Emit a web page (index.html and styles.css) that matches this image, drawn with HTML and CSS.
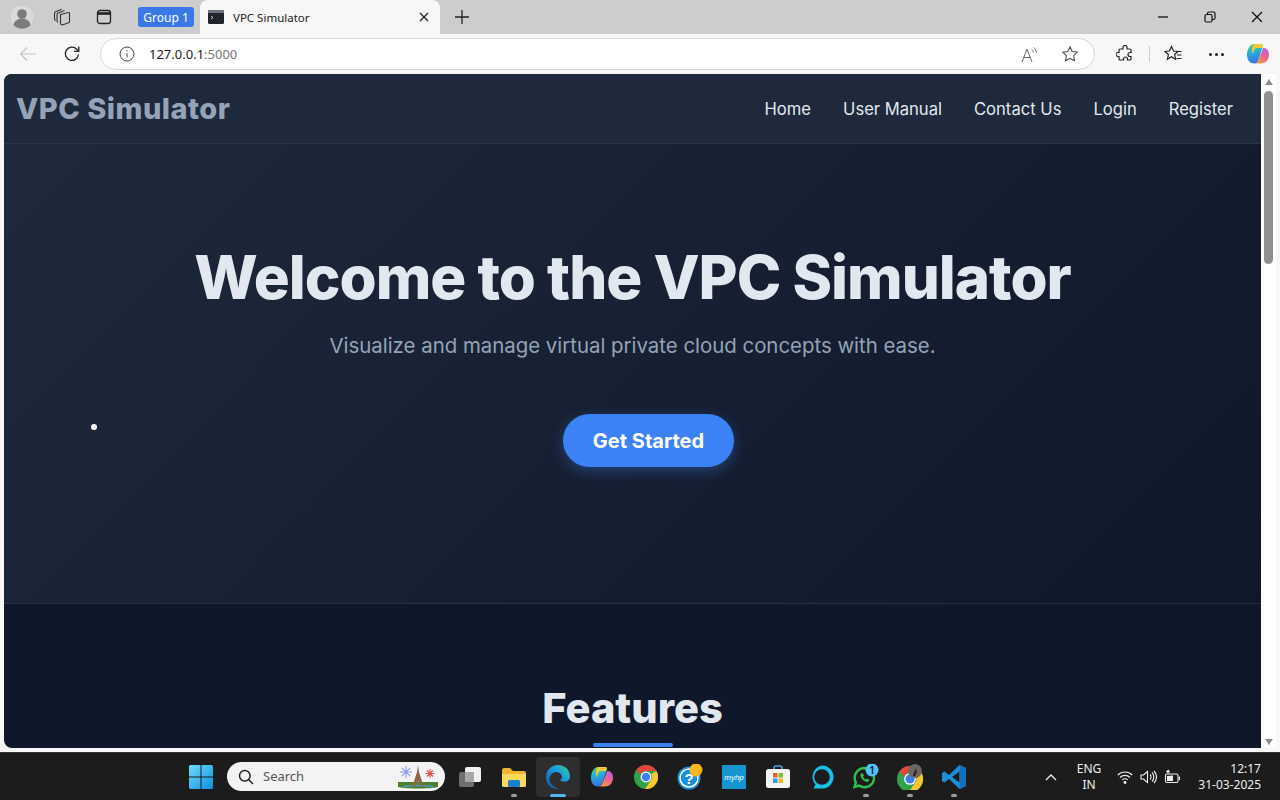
FILE: index.html
```html
<!DOCTYPE html>
<html lang="en">
<head>
    <meta charset="UTF-8">
    <title>VPC Simulator</title>
    <link rel="stylesheet" href="styles.css">
</head>
<body>
    <div class="tab-strip">
        <div class="tab-tools">
            <span class="avatar">
                <svg width="24" height="24" viewBox="0 0 24 24"><circle cx="12" cy="12" r="11.500" fill="#dcdad8"/><circle cx="12" cy="9" r="4.800" fill="#7d7b79"/><path d="M3.500 20c1-5 5-6.500 8.500-6.500s7.500 1.500 8.500 6.500a11.500 11.500 0 0 1-17 0z" fill="#7d7b79"/></svg>
            </span>
            <svg class="tool-workspaces" width="18" height="18" viewBox="0 0 18 18" fill="none" stroke="#333" stroke-width="1.100"><path d="M7.500 6.500l8-2c.7-.1 1 .2 1 .9v8.100c0 .7-.3 1.100-1 1.300l-5.500 2c-1.500.4-2.500-.3-2.500-1.800z" fill="#cdcdcd"/><path d="M5 14.500c-.8-.6-1-1.300-1-2V6.500c0-.8.300-1.300 1-1.600L11.500 2.500"/><path d="M2.600 12.500C1.800 12 1.500 11.300 1.500 10.500V5.500c0-.9.400-1.500 1.200-1.800L8.500 1.300"/></svg>
            <svg class="tool-tabs" width="16" height="16" viewBox="0 0 16 16" fill="none" stroke="#222" stroke-width="1.300"><rect x="1.500" y="1.500" width="13" height="13" rx="2.500"/><path d="M1.500 4.500h13" stroke-width="2.600"/></svg>
        </div>
        <span class="group-chip">Group 1</span>
        <div class="tab">
            <svg width="16" height="14" viewBox="0 0 16 14"><rect width="16" height="14" rx="1.500" fill="#20242c"/><rect y="0" width="16" height="3" fill="#6c7480"/><path d="M3 6l2 1.500L3 9" fill="none" stroke="#d5dae2" stroke-width=".9"/></svg>
            <span class="tab-title">VPC Simulator</span>
            <svg class="tab-close" width="10" height="10" viewBox="0 0 10 10" stroke="#222" stroke-width="1.300"><path d="M1 1l8 8M9 1l-8 8"/></svg>
        </div>
        <svg class="new-tab" width="16" height="16" viewBox="0 0 16 16" stroke="#222" stroke-width="1.300"><path d="M8 1v14M1 8h14"/></svg>
        <div class="window-buttons">
            <svg width="12" height="12" viewBox="0 0 12 12" stroke="#111" stroke-width="1.300"><path d="M1 6h10"/></svg>
            <svg width="12" height="12" viewBox="0 0 12 12" fill="none" stroke="#111" stroke-width="1.200"><rect x="1" y="3.500" width="7" height="7.500" rx="1.500"/><path d="M3.500 3.500V2.500C3.500 1.500 4 1 5 1h4.500C10.500 1 11 1.500 11 2.500V7c0 1-.5 1.500-1.500 1.500H8"/></svg>
            <svg width="12" height="12" viewBox="0 0 12 12" stroke="#111" stroke-width="1.300"><path d="M1 1l10 10M11 1L1 11"/></svg>
        </div>
    </div>

    <div class="toolbar">
        <svg class="nav-back" width="18" height="16" viewBox="0 0 18 16" fill="none" stroke="#c4c4c4" stroke-width="1.200"><path d="M17 8H1.500M8 1.500L1.500 8 8 14.500"/></svg>
        <svg class="nav-reload" width="18" height="18" viewBox="0 0 18 18" fill="none" stroke="#222" stroke-width="1.300"><path d="M15.500 9.500A6.600 6.600 0 1 1 13.500 4L15.500 6"/><path d="M15.800 1.500v4.800H11"/></svg>
        <div class="address-bar">
            <svg width="16" height="16" viewBox="0 0 16 16" fill="none" stroke="#444" stroke-width="1"><circle cx="8" cy="8" r="7"/><path d="M8 7v4.500M8 4.300v1.200"/></svg>
            <span class="url">127.0.0.1<span class="url-port">:5000</span></span>
            <span class="address-end">
                <svg class="read-aloud" width="18" height="17" viewBox="0 0 18 17" fill="none" stroke="#666" stroke-width="1"><path d="M1 16L6 3l5 13M2.800 11.500h6.400"/><path d="M10.500 3.500c1.200.7 1.800 1.700 1.800 3M12.500 1.500c1.800 1.200 2.800 3 2.800 5.300"/></svg>
                <svg width="18" height="18" viewBox="0 0 18 18" fill="none" stroke="#555" stroke-width="1.100"><path d="M9 1.800l2.200 4.700 5 .7-3.600 3.500.9 5.100L9 13.400l-4.500 2.400.9-5.100L1.800 7.200l5-.7z"/></svg>
            </span>
        </div>
        <div class="toolbar-end">
            <svg width="18" height="18" viewBox="0 0 18 18" fill="none" stroke="#222" stroke-width="1.200"><path d="M7 2.500a2 2 0 0 1 4 0V4h3a1 1 0 0 1 1 1v2.500h-1a2 2 0 0 0 0 4h1V14a1 1 0 0 1-1 1h-2.500v-1a2 2 0 0 0-4 0v1H4a1 1 0 0 1-1-1v-2.500H2a2 2 0 0 1 0-4h1V5a1 1 0 0 1 1-1h3z"/></svg>
            <span class="toolbar-divider"></span>
            <svg class="favorites" width="18" height="18" viewBox="0 0 18 18" fill="none" stroke="#222" stroke-width="1.200"><path d="M7.500 1.500l2 4.500 4.500.5-3.400 3 1 4.700-4.100-2.400-4.100 2.400 1-4.700L1 6.500 5.500 6z"/><path d="M12.500 6.500h5M13 10h4.500M12.500 13.500h5"/></svg>
            <span class="more-dots"><i></i><i></i><i></i></span>
            <svg class="copilot" width="24" height="24" viewBox="0 0 24 24"><use href="#copilotIcon"/></svg>
        </div>
    </div>

    <div class="viewport">
        <div class="page">
            <nav class="site-nav">
                <span class="brand">VPC Simulator</span>
                <div class="nav-links">
                    <a href="#">Home</a>
                    <a href="#">User Manual</a>
                    <a href="#">Contact Us</a>
                    <a href="#">Login</a>
                    <a href="#">Register</a>
                </div>
            </nav>
            <section class="hero">
                <span class="particle"></span>
                <h1>Welcome to the VPC Simulator</h1>
                <p>Visualize and manage virtual private cloud concepts with ease.</p>
                <a class="cta" href="#">Get Started</a>
            </section>
            <section class="features">
                <h2>Features</h2>
                <div class="title-bar"></div>
            </section>
        </div>
        <div class="scrollbar">
            <span class="arrow-up"></span>
            <span class="thumb"></span>
            <span class="arrow-down"></span>
        </div>
    </div>

    <div class="taskbar">
        <svg class="start" width="24" height="24" viewBox="0 0 24 24"><defs><linearGradient id="winG" x1="0" y1="0" x2="1" y2="1"><stop offset="0" stop-color="#6fdcfb"/><stop offset="1" stop-color="#0f8fe0"/></linearGradient></defs><path d="M0 1.500A1.500 1.500 0 0 1 1.500 0h10v11.500H0zM12.500 0h10A1.500 1.500 0 0 1 24 1.500v10H12.500zM0 12.500h11.500V24h-10A1.500 1.500 0 0 1 0 22.500zM12.500 12.500H24v10a1.500 1.500 0 0 1-1.500 1.500h-10z" fill="url(#winG)"/></svg>
        <div class="search-box">
            <svg width="16" height="16" viewBox="0 0 16 16" fill="none" stroke="#222" stroke-width="1.500"><circle cx="6.800" cy="6.800" r="5.300"/><path d="M10.800 10.800l4.200 4.200"/></svg>
            <span>Search</span>
            <svg class="search-art" width="42" height="26" viewBox="0 0 42 26"><path d="M1 18h40v5c-8 2-32 2-40 0z" fill="#4d7f33"/><path d="M6 23c6-2 24-2 30 0" stroke="#4a9fc8" stroke-width="1.500" fill="none"/><path d="M21 1l-1 7-4.500 14h3l2.500-5 2.500 5h3L22 8z" fill="#8a6a48"/><g stroke="#8d96ee" stroke-width="1.100"><path d="M9 2v12M3 8h12M4.800 3.800l8.400 8.400M13.200 3.800l-8.400 8.400"/></g><g stroke="#e0514f" stroke-width="1.100"><path d="M33 5v9M28.500 9.500h9M30 6.500l6 6M36 6.500l-6 6"/></g></svg>
        </div>
        <div class="task-icons">
            <span class="task-icon">
                <svg width="24" height="24" viewBox="0 0 24 24"><rect x="1" y="7" width="15" height="15" rx="2" fill="#6f6f6f"/><rect x="7" y="2" width="16" height="15" rx="2" fill="#f0f0f0"/><rect x="7" y="7" width="9" height="10" fill="#a8a8a8"/></svg>
            </span>
            <span class="task-icon is-open">
                <svg width="24" height="24" viewBox="0 0 24 24"><path d="M0 5a2 2 0 0 1 2-2h6l3 3h11a2 2 0 0 1 2 2v12a2 2 0 0 1-2 2H2a2 2 0 0 1-2-2z" fill="#eeb62e"/><path d="M0 9h24v11a2 2 0 0 1-2 2H2a2 2 0 0 1-2-2z" fill="#fbd95c"/><rect x="6" y="15" width="12" height="7" rx="1.500" fill="#1b7fcf"/></svg>
            </span>
            <span class="task-icon is-active">
                <svg width="24" height="24" viewBox="0 0 24 24"><defs><linearGradient id="edgeG" x1="0" y1="1" x2="1" y2="0"><stop offset="0" stop-color="#0c59a4"/><stop offset=".6" stop-color="#1b9de2"/><stop offset="1" stop-color="#3bd27c"/></linearGradient></defs><path d="M12 0c7 0 12 5 12 11.500 0 3-2.500 5-5.500 5-2 0-3.500-.5-4.500-1.500 2-1 2.500-3 1.500-5C14 7.500 11 6.500 8 7.500 4 9 2.500 13 4 17c1.500 3.500 5 6 9 6.500C6.500 25 0 20 0 12 0 5 5.500 0 12 0z" fill="url(#edgeG)"/></svg>
            </span>
            <span class="task-icon">
                <svg width="24" height="24" viewBox="0 0 24 24"><use href="#copilotIcon"/></svg>
            </span>
            <span class="task-icon">
                <svg width="24" height="24" viewBox="0 0 24 24"><use href="#chromeIcon"/></svg>
            </span>
            <span class="task-icon">
                <svg width="26" height="26" viewBox="0 0 26 26"><circle cx="12" cy="14" r="11.500" fill="#1a8fe0"/><circle cx="12" cy="14" r="9" fill="none" stroke="#fff" stroke-width="1.500"/><text x="12" y="19.500" class="help-mark">?</text><circle cx="19" cy="6" r="6.500" fill="#fbb81c"/></svg>
            </span>
            <span class="task-icon">
                <svg width="24" height="24" viewBox="0 0 24 24"><rect width="24" height="24" rx="1" fill="#1596d3"/><text x="12" y="15" class="hp-mark">myhp</text></svg>
            </span>
            <span class="task-icon">
                <svg width="24" height="24" viewBox="0 0 24 24"><path d="M8 5V3a2 2 0 0 1 2-2h4a2 2 0 0 1 2 2v2" fill="none" stroke="#49a7e0" stroke-width="1.500"/><rect x="0" y="4" width="24" height="19" rx="2.500" fill="#f3f3f3"/><rect x="7" y="8" width="4.500" height="4.500" fill="#f15a3a"/><rect x="12.500" y="8" width="4.500" height="4.500" fill="#7cc030"/><rect x="7" y="13.500" width="4.500" height="4.500" fill="#2a9fe8"/><rect x="12.500" y="13.500" width="4.500" height="4.500" fill="#fbb81c"/></svg>
            </span>
            <span class="task-icon">
                <svg width="24" height="24" viewBox="0 0 24 24"><path d="M12 .5a11.500 11.500 0 0 1 0 23H3.500l2-4A11.500 11.500 0 0 1 12 .5z" fill="#17c2e8"/><circle cx="12" cy="12" r="7.800" fill="#1c1c1c"/></svg>
            </span>
            <span class="task-icon is-open">
                <svg width="26" height="26" viewBox="0 0 26 26"><path d="M11 4a10 10 0 0 1 8.500 15.200A10 10 0 0 1 6 21.500L1.500 23l1.400-4.300A10 10 0 0 1 11 4z" fill="none" stroke="#2fc150" stroke-width="2.400"/><path d="M7.500 10c-.5 4 3.500 8 7.500 8l1.500-2-2.500-1.500-1 1c-1.500-.5-2.500-1.500-3-3l1-1L9.500 9z" fill="#2fc150"/><circle cx="19" cy="6" r="6.500" fill="#4fc3f7"/><text x="19" y="9.500" class="badge-mark">1</text></svg>
            </span>
            <span class="task-icon is-open">
                <svg width="26" height="26" viewBox="0 0 26 26"><g transform="translate(0 2)"><use href="#chromeIcon"/></g><circle cx="18" cy="7" r="7" fill="#6d6560"/><path d="M16 12c0-3 2-4 3-8 1 2 1 5-1 8z" fill="#2b2326"/></svg>
            </span>
            <span class="task-icon is-open">
                <svg width="24" height="24" viewBox="0 0 24 24"><path d="M17.500 0L24 3v18l-6.500 3L7 14l-4.500 3.500L0 16V8l2.500-1.500L7 10z" fill="#1c8fdb"/><path d="M17.500 6.500L10 12l7.500 5.500z" fill="#1c1c1c"/><path d="M17.500 0L24 3v18l-6.500 3z" fill="#0e72bf"/></svg>
            </span>
        </div>
        <div class="tray">
            <svg class="tray-chevron" width="12" height="8" viewBox="0 0 12 8" fill="none" stroke="#eee" stroke-width="1.300"><path d="M1 7l5-5 5 5"/></svg>
            <div class="tray-lang"><span>ENG</span><span>IN</span></div>
            <div class="tray-icons">
                <svg width="16" height="16" viewBox="0 0 16 16" fill="none" stroke="#eee" stroke-width="1.100"><path d="M.8 6a10 10 0 0 1 14.400 0M3 8.500a7 7 0 0 1 10 0M5.200 11a3.800 3.800 0 0 1 5.600 0"/><circle cx="8" cy="13.500" r=".9" fill="#eee"/></svg>
                <svg width="17" height="16" viewBox="0 0 17 16" fill="none" stroke="#eee" stroke-width="1.100"><path d="M1 6v4h2.500L7.500 13.500v-11L3.500 6z"/><path d="M10 5.500a3.500 3.500 0 0 1 0 5M12 3.500a6.500 6.500 0 0 1 0 9M14 2a8.500 8.500 0 0 1 0 12"/></svg>
                <svg width="17" height="16" viewBox="0 0 17 16" fill="none" stroke="#eee" stroke-width="1.100"><rect x="1.500" y="5" width="12.500" height="8.500" rx="1.500"/><path d="M3 12V7l6-.5V12z" fill="#eee" stroke="none"/><path d="M15.500 7.500v3.500"/><path d="M4 5V1.500L2.300 3.200M4 1.500l1.700 1.700"/></svg>
            </div>
            <div class="tray-clock"><span>12:17</span><span>31-03-2025</span></div>
        </div>
    </div>

    <svg class="icon-defs" width="0" height="0">
        <defs>
            <linearGradient id="copA" x1="0.2" y1="0" x2="0.4" y2="1"><stop offset="0" stop-color="#5fd35a"/><stop offset=".4" stop-color="#21b4d8"/><stop offset="1" stop-color="#3f6fe8"/></linearGradient>
            <linearGradient id="copB" x1="0.7" y1="0" x2="0.3" y2="1"><stop offset="0" stop-color="#c45be0"/><stop offset=".5" stop-color="#f0648c"/><stop offset="1" stop-color="#f79a3c"/></linearGradient>
        </defs>
        <symbol id="copilotIcon" viewBox="0 0 24 24">
            <path d="M8 2h7c1 0 1.800.5 2 1.500L12.500 18c-.6 2-1.700 3.500-4 3.500C4 21.500 1 18 1 13 1 7 4 2 8 2z" fill="url(#copA)"/>
            <path d="M8 2h7c1 0 1.800.5 2 1.500l-.8 2.500H11C9.500 6 8.700 7 8.200 8.500L6.500 12C5.500 8 6 4 8 2z" fill="#f4c83a"/>
            <path d="M17 6h1c3 0 5 3 5 6.500 0 5-3 9-8 9H9c2 0 3-1.500 3.500-3.500z" fill="url(#copB)"/>
        </symbol>
        <symbol id="chromeIcon" viewBox="0 0 24 24">
            <circle cx="12" cy="12" r="12" fill="#2fa24c"/>
            <path d="M12 0a12 12 0 0 1 10.400 6H12a6 6 0 0 0-5.600 3.800L2.300 5A12 12 0 0 1 12 0z" fill="#e2453a"/>
            <path d="M22.400 6A12 12 0 0 1 11 24l5.300-8A6 6 0 0 0 17.300 9z" fill="#fbc52e"/>
            <circle cx="12" cy="12" r="5.400" fill="#fff"/>
            <circle cx="12" cy="12" r="4.200" fill="#3f7ee8"/>
        </symbol>
    </svg>
</body>
</html>
```

FILE: styles.css
```css
/* Browser frame */
* {
    box-sizing: border-box;
}

html, body {
    height: 100%;
}

body {
    margin: 0;
    display: flex;
    flex-direction: column;
    overflow: hidden;
    font-family: "Noto Sans", "Open Sans", sans-serif;
    background-color: #f7f7f7;
}

.tab-strip {
    height: 34px;
    flex: none;
    display: flex;
    align-items: center;
    padding-left: 10px;
    background-color: #cdcdcd;
}

.tab-tools {
    display: flex;
    align-items: center;
}

.avatar {
    display: flex;
    width: 24px;
}

.tool-workspaces {
    margin-left: 19px;
}

.tool-tabs {
    margin-left: 25px;
}

.group-chip {
    margin-left: 26px;
    width: 56px;
    height: 20px;
    display: flex;
    align-items: center;
    justify-content: center;
    font-size: 12px;
    color: #fff;
    background-color: #3a78e8;
    border-radius: 3px;
}

.tab {
    margin-left: 6px;
    width: 240px;
    height: 34px;
    display: flex;
    align-items: center;
    padding: 0 11px 0 8px;
    background-color: #f7f7f7;
    border-radius: 8px 8px 0 0;
}

.tab-title {
    margin-left: 9px;
    font-size: 11.500px;
    color: #222;
    flex: 1;
}

.new-tab {
    margin-left: 14px;
}

.window-buttons {
    margin-left: auto;
    display: flex;
    gap: 35px;
    padding-right: 17px;
}

.toolbar {
    height: 40px;
    flex: none;
    display: flex;
    align-items: center;
    padding-left: 19px;
    background-color: #f7f7f7;
}

.nav-reload {
    margin-left: 26px;
}

.address-bar {
    margin-left: 19px;
    width: 995px;
    height: 32px;
    display: flex;
    align-items: center;
    padding: 0 15px 0 18px;
    background-color: #fff;
    border: 1px solid #d6d6d6;
    border-radius: 16px;
}

.url {
    margin-left: 14px;
    font-size: 13px;
    color: #1a1a1a;
}

.url-port {
    color: #777;
}

.address-end {
    margin-left: auto;
    display: flex;
    align-items: center;
    gap: 22px;
}

.toolbar-end {
    margin-left: 21px;
    display: flex;
    align-items: center;
}

.toolbar-divider {
    width: 1px;
    height: 16px;
    margin: 0 14px 0 15px;
    background-color: #cfcfcf;
}

.more-dots {
    margin-left: 27px;
    display: flex;
    gap: 3px;
}

.more-dots i {
    width: 3px;
    height: 3px;
    border-radius: 50%;
    background-color: #222;
}

.copilot {
    margin-left: 22px;
}

.viewport {
    height: 678px;
    flex: none;
    display: flex;
    padding: 0 4px 4px;
}

/* Simulator page */
.page {
    flex: 1;
    min-width: 0;
    overflow: hidden;
    background-color: #0f172a;
    border-radius: 8px 0 0 8px;
    font-family: Inter, "Open Sans", sans-serif;
}

.site-nav {
    height: 70px;
    display: flex;
    align-items: center;
    justify-content: space-between;
    padding: 0 28px 0 12px;
    background-color: #1e293b;
    border-bottom: 1px solid #2a3547;
}

.brand {
    font-size: 29px;
    font-weight: 800;
    letter-spacing: 0.5px;
    color: #94a3b8;
}

.nav-links {
    display: flex;
    gap: 32px;
}

.nav-links a {
    font-size: 16.600px;
    color: #e2e8f0;
    text-decoration: none;
}

.hero {
    position: relative;
    height: 460px;
    display: flex;
    flex-direction: column;
    align-items: center;
    padding-top: 95px;
    background: linear-gradient(135deg, #1e293b, #0f172a);
    border-bottom: 1px solid #253044;
}

.particle {
    position: absolute;
    left: 87px;
    top: 280px;
    width: 6px;
    height: 6px;
    border-radius: 50%;
    background-color: #fff;
}

.hero h1 {
    margin: 0;
    font-size: 60px;
    line-height: 76px;
    font-weight: 800;
    letter-spacing: -1px;
    color: #e2e8f0;
}

.hero p {
    margin: 15px 0 0;
    font-size: 20.400px;
    line-height: 32px;
    color: #94a3b8;
}

.cta {
    margin: 52px 0 0 32px;
    width: 171px;
    height: 53px;
    display: flex;
    align-items: center;
    justify-content: center;
    font-size: 20px;
    font-weight: 700;
    color: #fff;
    text-decoration: none;
    background-color: #3b82f6;
    border-radius: 27px;
    box-shadow: 0 4px 14px rgba(59, 130, 246, 0.35);
}

.features {
    display: flex;
    flex-direction: column;
    align-items: center;
    padding-top: 78px;
}

.features h2 {
    margin: 0;
    font-size: 41.600px;
    line-height: 52px;
    font-weight: 800;
    color: #e2e8f0;
}

.title-bar {
    margin-top: 9px;
    width: 80px;
    height: 4px;
    background-color: #3b82f6;
    border-radius: 2px;
}

/* Scrollbar */
.scrollbar {
    width: 15px;
    flex: none;
    display: flex;
    flex-direction: column;
    align-items: center;
    background-color: #fff;
}

.arrow-up {
    margin-top: 5px;
    border: 4.500px solid transparent;
    border-top: 0;
    border-bottom: 6px solid #8a8a8a;
}

.thumb {
    margin-top: 6px;
    width: 9px;
    height: 173px;
    background-color: #8f8f8f;
    border-radius: 5px;
}

.arrow-down {
    margin-top: auto;
    margin-bottom: 3px;
    border: 4.500px solid transparent;
    border-bottom: 0;
    border-top: 6px solid #8a8a8a;
}

/* Windows taskbar */
.taskbar {
    height: 48px;
    flex: none;
    display: flex;
    align-items: center;
    padding-left: 189px;
    color: #eee;
    background-color: #1c1c1c;
    border-top: 1px solid #333;
}

.search-box {
    margin-left: 14px;
    width: 218px;
    height: 29px;
    display: flex;
    align-items: center;
    padding: 0 6px 0 11px;
    font-size: 13px;
    line-height: 16px;
    color: #555;
    background-color: #f3f3f3;
    border-radius: 15px;
}

.search-box span {
    margin-left: 9px;
    padding-bottom: 2px;
}

.search-art {
    margin-left: auto;
}

.task-icons {
    margin-left: 3px;
    display: flex;
}

.task-icon {
    position: relative;
    width: 44px;
    height: 40px;
    display: flex;
    align-items: center;
    justify-content: center;
    border-radius: 4px;
}

.task-icon.is-active {
    background-color: #2e2e2e;
}

.task-icon.is-open::after,
.task-icon.is-active::after {
    content: "";
    position: absolute;
    left: 50%;
    bottom: 0;
    width: 6px;
    height: 3px;
    margin-left: -3px;
    border-radius: 2px;
    background-color: #9a9a9a;
}

.task-icon.is-active::after {
    width: 16px;
    margin-left: -8px;
    background-color: #4fb6f2;
}

.help-mark {
    font-family: "Liberation Sans", sans-serif;
    font-size: 15px;
    font-weight: 700;
    fill: #fff;
    text-anchor: middle;
}

.hp-mark {
    font-family: "Liberation Sans", sans-serif;
    font-size: 8px;
    font-style: italic;
    fill: #fff;
    text-anchor: middle;
}

.badge-mark {
    font-family: "Noto Sans", sans-serif;
    font-size: 10px;
    font-weight: 600;
    fill: #111;
    text-anchor: middle;
}

.tray {
    margin-left: auto;
    display: flex;
    align-items: center;
    padding-right: 19px;
    font-size: 12px;
    line-height: 16px;
}

.tray-lang {
    margin-left: 20px;
    display: flex;
    flex-direction: column;
    align-items: center;
}

.tray-icons {
    margin-left: 16px;
    display: flex;
    align-items: center;
    gap: 7px;
}

.tray-clock {
    margin-left: 17px;
    display: flex;
    flex-direction: column;
    align-items: flex-end;
}

.icon-defs {
    position: absolute;
}
```
